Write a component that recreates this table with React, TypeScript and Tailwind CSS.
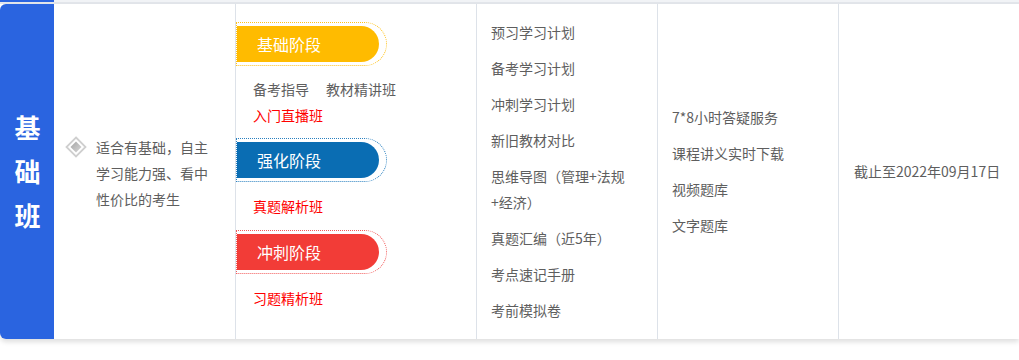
import React from 'react';

const font = { fontFamily: '"Noto Sans CJK SC", "Noto Sans", sans-serif' };

interface StageProps {
    title: string;
    fill: string;
    line: string;
}

const Stage: React.FC<StageProps> = ({ title, fill, line }) => {
    return (
        <div className={`w-[151px] h-[44px] border border-dotted ${line} rounded-r-[22px] flex items-center`}>
            <div className={`w-[142px] h-[36px] ${fill} rounded-r-full flex items-center pl-[20px] text-white text-[16px]`}>
                {title}
            </div>
        </div>
    );
};

const Diamond = () => (
    <svg width="22" height="22" viewBox="0 0 22 22" className="shrink-0 mt-[2px]">
        <defs>
            <linearGradient id="dg" x1="0" y1="0" x2="1" y2="1">
                <stop offset="0" stopColor="#a4a4a4" />
                <stop offset="1" stopColor="#d8d8d8" />
            </linearGradient>
        </defs>
        <polygon points="11,1.5 20.5,11 11,20.5 1.5,11" fill="#fff" stroke="#cfcfcf" strokeWidth="1.8" />
        <polygon points="11,5.5 16.5,11 11,16.5 5.5,11" fill="url(#dg)" />
    </svg>
);

const plans = ['预习学习计划', '备考学习计划', '冲刺学习计划', '新旧教材对比'];
const plans2 = ['真题汇编（近5年）', '考点速记手册', '考前模拟卷'];
const services = ['7*8小时答疑服务', '课程讲义实时下载', '视频题库', '文字题库'];

export default function App() {
    return (
        <div className="w-[1019px] h-[360px] bg-white overflow-hidden" style={font}>
            <div className="flex h-[2px]">
                <div className="w-[54px] bg-[#2a64e0]" />
                <div className="flex-1 bg-[#f1f3f6]" />
            </div>
            <div className="h-[2px] bg-[#e3e6eb]" />
            <div className="flex h-[335px] rounded-l-md overflow-hidden shadow-[0_3px_5px_rgba(0,0,0,0.13)] text-[14px] text-[#5e5e5e]">
                <div className="w-[54px] bg-[#2a64e0] flex flex-col items-center justify-center text-white font-bold text-[26px] leading-[44px] pl-[1px] pb-[2px]">
                    <span>基</span>
                    <span>础</span>
                    <span>班</span>
                </div>
                <div className="w-[182px] border-r border-[#dde2e9] flex items-center pl-[11px]">
                    <div className="flex items-start gap-[9px] mt-[2px]">
                        <Diamond />
                        <p className="w-[118px] leading-[26px]">适合有基础，自主学习能力强、看中性价比的考生</p>
                    </div>
                </div>
                <div className="w-[241px] border-r border-[#dde2e9] pt-[18px]">
                    <Stage title="基础阶段" fill="bg-[#ffbb00]" line="border-[#ffc21a]" />
                    <div className="mt-[10px] pl-[17px] leading-[26px]">
                        <div><span className="mr-[17px]">备考指导</span><span>教材精讲班</span></div>
                        <div className="text-[#ff0000]">入门直播班</div>
                    </div>
                    <div className="mt-[10px]">
                        <Stage title="强化阶段" fill="bg-[#0a6db3]" line="border-[#2a80c0]" />
                    </div>
                    <div className="mt-[11px] pl-[17px] leading-[26px] text-[#ff0000]">真题解析班</div>
                    <div className="mt-[11px]">
                        <Stage title="冲刺阶段" fill="bg-[#f23c37]" line="border-[#f25a5a]" />
                    </div>
                    <div className="mt-[11px] pl-[17px] leading-[26px] text-[#ff0000]">习题精析班</div>
                </div>
                <div className="w-[181px] border-r border-[#dde2e9] pt-[15px] pl-[14px] leading-[26px] flex flex-col gap-[10px]">
                    {plans.map((p, idx) => (
                        <div key={idx}>{p}</div>
                    ))}
                    <div>思维导图（管理+法规<br />+经济）</div>
                    {plans2.map((p, idx) => (
                        <div key={idx}>{p}</div>
                    ))}
                </div>
                <div className="w-[181px] border-r border-[#dde2e9] pl-[14px] pb-[2px] leading-[26px] flex flex-col justify-center gap-[10px]">
                    {services.map((s, idx) => (
                        <div key={idx}>{s}</div>
                    ))}
                </div>
                <div className="flex-1 flex items-center pl-[15px]">
                    截止至2022年09月17日
                </div>
            </div>
        </div>
    );
}
